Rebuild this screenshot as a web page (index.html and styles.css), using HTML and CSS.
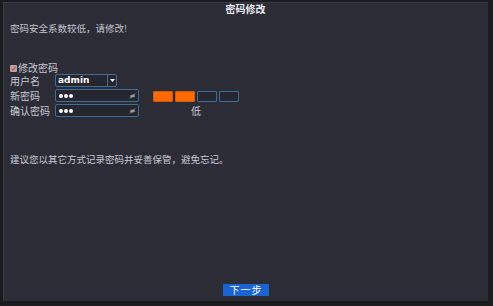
FILE: index.html
```html
<!DOCTYPE html>
<html>
<head>
<meta charset="utf-8">
<link rel="stylesheet" href="styles.css">
</head>
<body>
<div class="frame">
  <div class="title">密码修改</div>
  <div class="content">
    <div class="warning">密码安全系数较低，请修改!</div>
    <div class="check-row">
      <span class="checkbox">
        <svg width="7" height="7" viewBox="0 0 7 7"><path d="M1.3 3.6 L2.9 5.2 L5.8 1.6" fill="none" stroke="#e04a4a" stroke-width="1.2"/></svg>
      </span>
      <span>修改密码</span>
    </div>
    <div class="form">
      <div class="label">用户名</div>
      <div class="select">
        <span class="value">admin</span>
        <span class="drop"><svg width="5" height="3" viewBox="0 0 5 3"><path d="M0 0 H5 L2.5 3 Z" fill="#ffffff"/></svg></span>
      </div>
      <div></div>
      <div class="label">新密码</div>
      <div class="input">
        <span class="dots"><i></i><i></i><i></i></span>
        <svg class="eye" width="7" height="6" viewBox="0 0 7 6"><path d="M0.5 3 Q3.5 0 6.5 3 Q3.5 6 0.5 3 Z" fill="#8a8a95"/><path d="M1 5.5 L6 0.5" stroke="#c0c0c8" stroke-width="0.8"/></svg>
      </div>
      <div class="meter">
        <div class="bars"><span class="bar on"></span><span class="bar on"></span><span class="bar"></span><span class="bar"></span></div>
        <div class="level">低</div>
      </div>
      <div class="label">确认密码</div>
      <div class="input">
        <span class="dots"><i></i><i></i><i></i></span>
        <svg class="eye" width="7" height="6" viewBox="0 0 7 6"><path d="M0.5 3 Q3.5 0 6.5 3 Q3.5 6 0.5 3 Z" fill="#8a8a95"/><path d="M1 5.5 L6 0.5" stroke="#c0c0c8" stroke-width="0.8"/></svg>
      </div>
    </div>
    <div class="advice">建议您以其它方式记录密码并妥善保管，避免忘记。</div>
  </div>
  <div class="footer"><button class="next">下一步</button></div>
</div>
</body>
</html>
```
FILE: styles.css
```css
html, body {
  margin: 0;
  padding: 0;
  background: #1b1b1f;
}
body {
  font-family: "Noto Sans CJK SC", "Noto Sans", sans-serif;
  color: #c9c9d2;
}
.frame {
  width: 493px;
  height: 306px;
  box-sizing: border-box;
  border-style: solid;
  border-color: #1b1b1f;
  border-width: 2px 5px 5px 3px;
  background: #2c2c37;
  box-shadow: inset 1px 1px 0 #3a3a44;
  display: flex;
  flex-direction: column;
}
.title {
  height: 14px;
  line-height: 14px;
  text-align: center;
  font-size: 10px;
  font-weight: bold;
  color: #ececf2;
}
.content {
  flex: 1;
  padding-left: 7px;
  display: flex;
  flex-direction: column;
}
.warning {
  margin-top: 6px;
  font-size: 9.5px;
  line-height: 12px;
  color: #c4c4ce;
}
.check-row {
  margin-top: 28px;
  display: flex;
  align-items: center;
  gap: 1px;
  font-size: 10px;
  line-height: 12px;
}
.checkbox {
  width: 7px;
  height: 7px;
  background: #b9a3a8;
  border-radius: 1px;
  display: flex;
  align-items: center;
  justify-content: center;
}
.checkbox svg { display: block; }
.form {
  display: grid;
  grid-template-columns: 45px 84px auto;
  column-gap: 0;
  row-gap: 2px;
  align-items: center;
  font-size: 10px;
}
.label {
  line-height: 13px;
}
.select {
  width: 62px;
  height: 13px;
  box-sizing: border-box;
  border: 1px solid #3f6d96;
  border-radius: 2px;
  display: flex;
  align-items: center;
  background: #262630;
}
.select .value {
  flex: 1;
  padding-left: 2px;
  color: #ffffff;
  font-family: "DejaVu Sans", sans-serif;
  font-weight: bold;
  font-size: 9px;
  line-height: 11px;
}
.select .drop {
  width: 8px;
  height: 11px;
  border-left: 1px solid #3f6d96;
  display: flex;
  align-items: center;
  justify-content: center;
}
.select .drop svg { display: block; }
.input {
  width: 84px;
  height: 13px;
  box-sizing: border-box;
  border: 1px solid #3f6d96;
  border-radius: 2px;
  background: #262630;
  display: flex;
  align-items: center;
  justify-content: space-between;
  padding: 0 2px 0 3px;
}
.dots {
  display: flex;
  gap: 1px;
}
.dots i {
  width: 4px;
  height: 4px;
  border-radius: 50%;
  background: #ffffff;
  display: block;
}
.eye { display: block; }
.meter {
  grid-row: 2 / span 2;
  grid-column: 3;
  align-self: start;
  margin-top: 2px;
  margin-left: 14px;
  width: 86px;
  display: flex;
  flex-direction: column;
  align-items: center;
}
.bars {
  display: flex;
  gap: 2px;
}
.bar {
  width: 20px;
  height: 11px;
  box-sizing: border-box;
  border: 1px solid #3f6d96;
  border-radius: 1px;
  background: #262630;
}
.bar.on {
  background: #ff6a00;
  border-color: #cf5a10;
}
.level {
  margin-top: 2px;
  font-size: 10px;
  line-height: 13px;
}
.advice {
  margin-top: 36px;
  font-size: 9.5px;
  line-height: 12px;
}
.footer {
  height: 17px;
  display: flex;
  justify-content: center;
  align-items: flex-start;
  padding-left: 1px;
}
.next {
  width: 46px;
  height: 12px;
  padding: 0;
  border: none;
  background: #1c63d2;
  color: #ffffff;
  font-family: "Noto Sans CJK SC", sans-serif;
  font-size: 10px;
  line-height: 12px;
  letter-spacing: 1px;
}
```
